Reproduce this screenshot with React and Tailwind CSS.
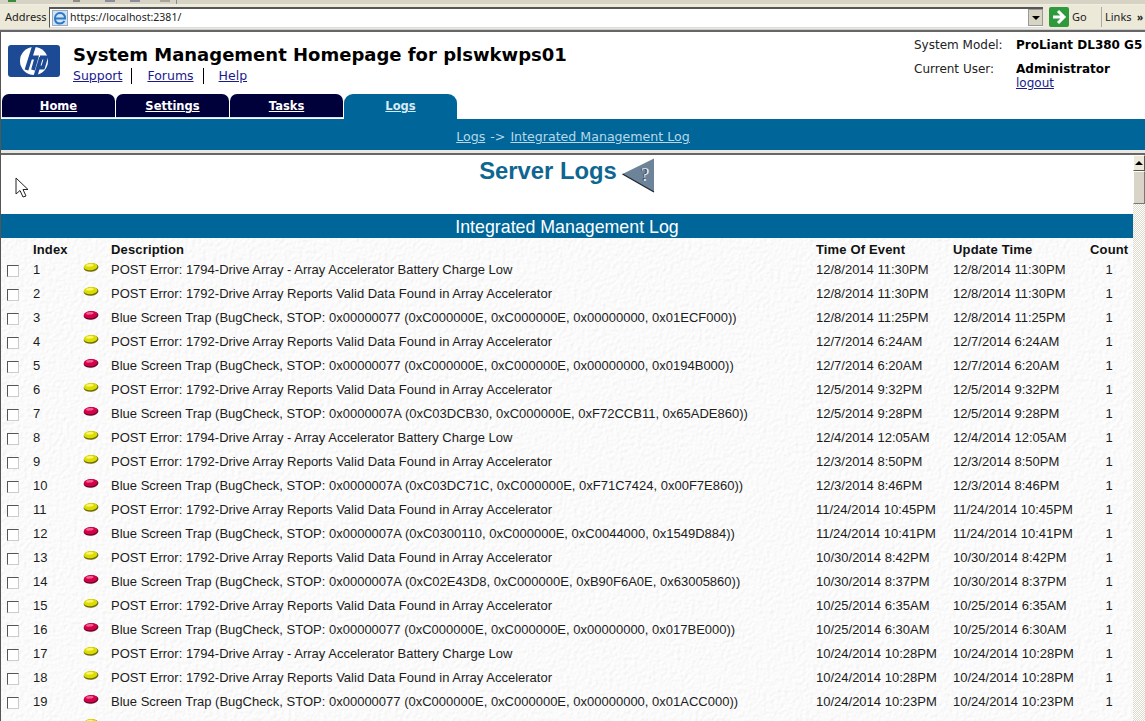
const rows = [
  ["1", "y", "POST Error: 1794-Drive Array - Array Accelerator Battery Charge Low", "12/8/2014 11:30PM", "12/8/2014 11:30PM"],
  ["2", "y", "POST Error: 1792-Drive Array Reports Valid Data Found in Array Accelerator", "12/8/2014 11:30PM", "12/8/2014 11:30PM"],
  ["3", "r", "Blue Screen Trap (BugCheck, STOP: 0x00000077 (0xC000000E, 0xC000000E, 0x00000000, 0x01ECF000))", "12/8/2014 11:25PM", "12/8/2014 11:25PM"],
  ["4", "y", "POST Error: 1792-Drive Array Reports Valid Data Found in Array Accelerator", "12/7/2014 6:24AM", "12/7/2014 6:24AM"],
  ["5", "r", "Blue Screen Trap (BugCheck, STOP: 0x00000077 (0xC000000E, 0xC000000E, 0x00000000, 0x0194B000))", "12/7/2014 6:20AM", "12/7/2014 6:20AM"],
  ["6", "y", "POST Error: 1792-Drive Array Reports Valid Data Found in Array Accelerator", "12/5/2014 9:32PM", "12/5/2014 9:32PM"],
  ["7", "r", "Blue Screen Trap (BugCheck, STOP: 0x0000007A (0xC03DCB30, 0xC000000E, 0xF72CCB11, 0x65ADE860))", "12/5/2014 9:28PM", "12/5/2014 9:28PM"],
  ["8", "y", "POST Error: 1794-Drive Array - Array Accelerator Battery Charge Low", "12/4/2014 12:05AM", "12/4/2014 12:05AM"],
  ["9", "y", "POST Error: 1792-Drive Array Reports Valid Data Found in Array Accelerator", "12/3/2014 8:50PM", "12/3/2014 8:50PM"],
  ["10", "r", "Blue Screen Trap (BugCheck, STOP: 0x0000007A (0xC03DC71C, 0xC000000E, 0xF71C7424, 0x00F7E860))", "12/3/2014 8:46PM", "12/3/2014 8:46PM"],
  ["11", "y", "POST Error: 1792-Drive Array Reports Valid Data Found in Array Accelerator", "11/24/2014 10:45PM", "11/24/2014 10:45PM"],
  ["12", "r", "Blue Screen Trap (BugCheck, STOP: 0x0000007A (0xC0300110, 0xC000000E, 0xC0044000, 0x1549D884))", "11/24/2014 10:41PM", "11/24/2014 10:41PM"],
  ["13", "y", "POST Error: 1792-Drive Array Reports Valid Data Found in Array Accelerator", "10/30/2014 8:42PM", "10/30/2014 8:42PM"],
  ["14", "r", "Blue Screen Trap (BugCheck, STOP: 0x0000007A (0xC02E43D8, 0xC000000E, 0xB90F6A0E, 0x63005860))", "10/30/2014 8:37PM", "10/30/2014 8:37PM"],
  ["15", "y", "POST Error: 1792-Drive Array Reports Valid Data Found in Array Accelerator", "10/25/2014 6:35AM", "10/25/2014 6:35AM"],
  ["16", "r", "Blue Screen Trap (BugCheck, STOP: 0x00000077 (0xC000000E, 0xC000000E, 0x00000000, 0x017BE000))", "10/25/2014 6:30AM", "10/25/2014 6:30AM"],
  ["17", "y", "POST Error: 1794-Drive Array - Array Accelerator Battery Charge Low", "10/24/2014 10:28PM", "10/24/2014 10:28PM"],
  ["18", "y", "POST Error: 1792-Drive Array Reports Valid Data Found in Array Accelerator", "10/24/2014 10:28PM", "10/24/2014 10:28PM"],
  ["19", "r", "Blue Screen Trap (BugCheck, STOP: 0x00000077 (0xC000000E, 0xC000000E, 0x00000000, 0x01ACC000))", "10/24/2014 10:23PM", "10/24/2014 10:23PM"],
  ["20", "y", "POST Error: 1792-Drive Array Reports Valid Data Found in Array Accelerator", "10/18/2014 10:28PM", "10/18/2014 10:28PM"],
];

function Bulb({ kind }) {
  const main = kind === "y" ? "#dcdc00" : "#d4004c";
  const light = kind === "y" ? "#f8f66a" : "#f2608c";
  const dark = kind === "y" ? "#6f6c10" : "#70082c";
  return (
    <svg width="16" height="10" viewBox="0 0 16 10" className="block">
      <g transform="rotate(-5 8 5)">
        <ellipse cx="8" cy="5.5" rx="7.4" ry="4.2" fill={dark} />
        <ellipse cx="7.6" cy="4.6" rx="6.8" ry="3.6" fill={main} />
        <ellipse cx="7" cy="3.2" rx="3.8" ry="1.3" fill={light} />
      </g>
    </svg>
  );
}

function HpLogo() {
  return (
    <div className="w-[52px] h-[32px] rounded-[3px] bg-[#1c4a94] flex items-center justify-center">
      <svg width="34" height="32" viewBox="0 0 34 32">
        <circle cx="17" cy="16" r="14" fill="#fff" />
        <g fill="none" stroke="#1c4a94" strokeWidth="3.8">
          <path d="M17 1 L9.5 25" />
          <path d="M13 12.5 H19.5 L16 25" />
          <path d="M24 12.5 L18.5 31" />
          <path d="M23 12.5 H29 L26 22.5 H20.5" />
        </g>
      </svg>
    </div>
  );
}

function Tab({ label, active }) {
  return (
    <div
      className={
        active
          ? "w-[113px] h-[25px] pt-px rounded-t-[9px] bg-[#006699] flex items-center justify-center text-[#d6eaf4] underline font-bold text-[11.5px] font-['DejaVu_Sans',sans-serif]"
          : "w-[113px] h-[24px] pt-[2px] mr-px rounded-t-[7px] bg-[#00003a] border-b border-[#cfe6ee] flex items-center justify-center text-white underline font-bold text-[11.5px] font-['DejaVu_Sans',sans-serif]"
      }
    >
      {label}
    </div>
  );
}

export default function App() {
  return (
    <div className="w-[1145px] h-[721px] overflow-hidden bg-white flex flex-col font-['Liberation_Sans',sans-serif] text-black">
      {/* browser chrome */}
      <div className="h-[5px] bg-[#d6d2c4] shrink-0 flex items-start border-b border-[#f0eee2]">
        <span className="ml-[8px] w-[8px] h-[2px] bg-[#3c8a3c]" />
        <span className="ml-[57px] w-[7px] h-[2px] bg-[#8c8c84]" />
        <span className="ml-[25px] w-[10px] h-[2px] bg-[#8c8c9c]" />
        <span className="ml-[15px] w-[10px] h-[2px] bg-[#8c8c9c]" />
        <span className="ml-[20px] w-[10px] h-[2px] bg-[#a8a498]" />
        <span className="ml-[6px] w-px h-[4px] bg-[#8c8c84]" />
      </div>
      <div className="h-[24px] bg-[#ece9d8] shrink-0 flex items-center text-[11px] font-['Noto_Sans',sans-serif] text-[#222] whitespace-nowrap">
        <span className="w-[49px] shrink-0 pl-[5px]">Address</span>
        <div className="w-[994px] shrink-0 h-[21px] bg-white border-t-2 border-l border-[#555] border-b border-b-[#ddd] flex items-center justify-between">
          <div className="flex items-center">
            <svg width="16" height="16" viewBox="0 0 16 16" className="ml-[2px]">
              <rect x="0.5" y="0.5" width="15" height="15" fill="#d4e2f2" stroke="#9ab" />
              <path d="M3 8.5 H13 C13 5 11 3 8 3 C5 3 3 5.5 3 8.5 C3 11.5 5 13.5 8 13.5 C10 13.5 11.5 12.5 12.5 11" fill="none" stroke="#2a78c8" strokeWidth="2" />
            </svg>
            <span className="ml-[2px] text-[10.5px]">https://localhost:2381/</span>
          </div>
          <div className="w-[15px] h-[17px] bg-[#d8d4c4] border border-[#999] flex items-center justify-center">
            <div className="w-0 h-0 border-x-[4px] border-x-transparent border-t-[4px] border-t-black" />
          </div>
        </div>
        <svg width="20" height="20" viewBox="0 0 20 20" className="ml-[6px] shrink-0">
          <rect width="20" height="20" rx="2" fill="#2f9a3c" />
          <path d="M9 4 L15 10 L9 16 M4 10 H15" fill="none" stroke="#fff" strokeWidth="3" />
        </svg>
        <span className="ml-[3px] w-[29px] shrink-0">Go</span>
        <div className="w-px h-[20px] bg-[#aaa] shrink-0" />
        <span className="ml-[3px] w-[32px] shrink-0">Links</span>
        <span className="font-bold text-[10px]">»</span>
      </div>
      <div className="h-[3px] shrink-0 bg-[#666] border-t border-[#ccc]" />

      <div className="flex-1 min-h-0 flex flex-col border-l border-[#555]">
        {/* page header */}
        <div className="h-[62px] shrink-0 flex font-['DejaVu_Sans',sans-serif]">
          <div className="pl-[7px] pt-[13px] w-[72px] shrink-0">
            <HpLogo />
          </div>
          <div className="w-[800px] shrink-0 pt-[11px]">
            <h1 className="text-[18px] leading-[24px] font-bold">System Management Homepage for plswkwps01</h1>
            <div className="flex text-[12.5px] leading-[16px] mt-[1px] text-[#1a1a8c]">
              <span className="underline pr-[9px] border-r border-black">Support</span>
              <span className="underline pl-[15px] pr-[9px] border-r border-black">Forums</span>
              <span className="underline pl-[15px]">Help</span>
            </div>
          </div>
          <div className="ml-[41px] pt-[4px] text-[12px] text-[#222] whitespace-nowrap">
            <div className="flex h-[24px]">
              <span className="w-[102px]">System Model:</span>
              <span className="font-bold text-black">ProLiant DL380 G5</span>
            </div>
            <div className="flex">
              <span className="w-[102px]">Current User:</span>
              <div className="flex flex-col leading-[14px] pt-[2px]">
                <span className="font-bold text-black">Administrator</span>
                <span className="underline text-[#1a1a8c]">logout</span>
              </div>
            </div>
          </div>
        </div>

        {/* tabs */}
        <div className="h-[25px] shrink-0 flex items-start pl-px">
          <Tab label="Home" />
          <Tab label="Settings" />
          <Tab label="Tasks" />
          <Tab label="Logs" active />
        </div>
        <div className="h-[31px] shrink-0 bg-[#006699] flex items-center justify-center pt-[6px] text-[12.6px] text-[#b8d8e8] font-['DejaVu_Sans',sans-serif]">
          <span className="underline">Logs</span>
          <span className="mx-[5px]">-&gt;</span>
          <span className="underline">Integrated Management Log</span>
        </div>
        <div className="h-[3px] shrink-0 bg-[#e8e8e0]" />
        <div className="h-[2px] shrink-0 bg-[#666]" />

        {/* frame */}
        <div className="flex-1 flex min-h-0">
          <div className="w-[1132px] shrink-0 min-h-0 overflow-hidden">
            <div className="h-[59px] relative flex justify-center pt-px">
              <svg width="17" height="23" viewBox="0 0 17 23" className="absolute left-[14px] top-[22px]">
                <path d="M1 1 V17 L5 13.5 L8 20 L11 19 L8 12.5 H13 Z" fill="#fff" stroke="#222" strokeWidth="1" />
              </svg>
              <div className="flex items-start">
                <span className="text-[23.8px] leading-[28px] mt-px font-bold text-[#0f6691]">Server Logs</span>
                <svg width="33" height="35" viewBox="0 0 33 35" className="ml-[5px] mt-[2px]">
                  <path d="M0.5 16 L32 0.5 V34 Z" fill="#6d8399" />
                  <path d="M0.5 16 L32 34" fill="none" stroke="#1c2630" strokeWidth="1.2" />
                  <text x="18" y="23" fontSize="19" fontWeight="700" fill="#3a4652" fontFamily="Liberation Serif">?</text>
                  <text x="19" y="23" fontSize="19" fill="#e4eaef" fontFamily="Liberation Serif">?</text>
                </svg>
              </div>
            </div>
            <div className="h-[24px] bg-[#006699] flex items-center justify-center text-white text-[17.8px] pt-[2px]">
              Integrated Management Log
            </div>
            <div className="relative h-[600px] bg-[#f3f3f2] text-[13px] text-[#1c1c1c]">
              {/* paper texture of the page background */}
              <svg className="absolute inset-0 w-full h-full">
                <filter id="paper" x="0" y="0" width="100%" height="100%">
                  <feTurbulence type="fractalNoise" baseFrequency="0.28" numOctaves="3" seed="4" />
                  <feDiffuseLighting surfaceScale="0.55" lightingColor="#ffffff" diffuseConstant="1">
                    <feDistantLight azimuth="45" elevation="74" />
                  </feDiffuseLighting>
                </filter>
                <rect width="100%" height="100%" filter="url(#paper)" />
              </svg>
              <div className="relative">
                <div className="flex h-[20px] items-center pt-[4px] font-bold text-[13px] tracking-[0.15px] text-[#111]">
                  <span className="w-[32px] shrink-0" />
                  <span className="w-[78px] shrink-0">Index</span>
                  <span className="w-[705px] shrink-0">Description</span>
                  <span className="w-[137px] shrink-0">Time Of Event</span>
                  <span className="w-[137px] shrink-0">Update Time</span>
                  <span>Count</span>
                </div>
                {rows.map((r) => (
                  <div key={r[0]} className="flex h-[24px] items-center">
                    <span className="w-[32px] shrink-0 pl-[6px] pt-[2px]">
                      <span className="block w-[12px] h-[12px] bg-white border border-[#555] border-r-[#ccc] border-b-[#ccc]" />
                    </span>
                    <span className="w-[50px] shrink-0">{r[0]}</span>
                    <span className="w-[28px] shrink-0 pb-[7px]">
                      <Bulb kind={r[1]} />
                    </span>
                    <span className="w-[705px] shrink-0 whitespace-nowrap">{r[2]}</span>
                    <span className="w-[137px] shrink-0 whitespace-nowrap">{r[3]}</span>
                    <span className="w-[137px] shrink-0 whitespace-nowrap">{r[4]}</span>
                    <span className="w-[38px] shrink-0 text-center">1</span>
                  </div>
                ))}
              </div>
            </div>
          </div>
          {/* scrollbar */}
          <div className="w-[12px] shrink-0 flex flex-col bg-[repeating-conic-gradient(#dedbcc_0_25%,#fff_0_50%)] bg-[length:2px_2px]">
            <div className="h-[16px] bg-[#ece9d8] border border-[#fff] border-b-[#555] border-r-[#555] flex items-center justify-center">
              <div className="w-0 h-0 border-x-[4px] border-x-transparent border-b-[4px] border-b-black" />
            </div>
            <div className="h-[33px] bg-[#d8d4c8] border border-[#fff] border-b-[#777] border-r-[#777]" />
          </div>
        </div>
      </div>
    </div>
  );
}
